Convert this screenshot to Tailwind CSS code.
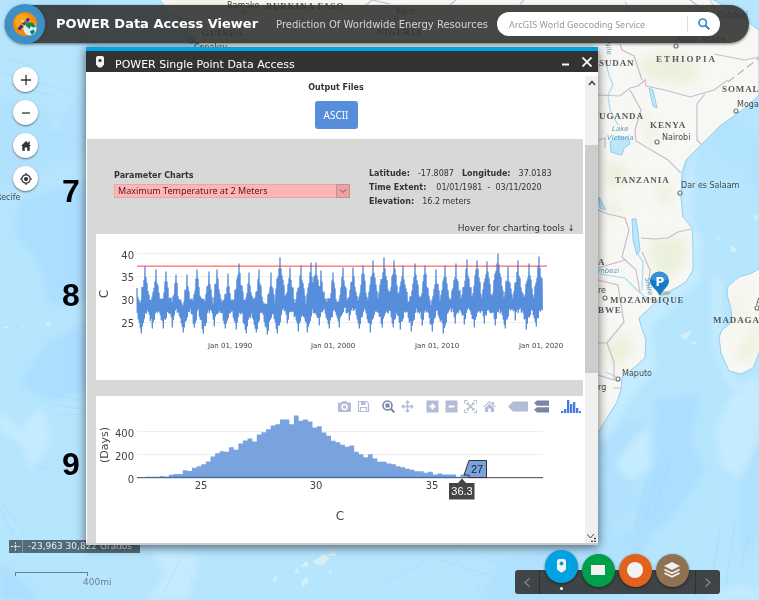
<!DOCTYPE html>
<html lang="en">
<head>
<meta charset="utf-8">
<meta name="viewport" content="width=device-width, initial-scale=1">
<title>POWER Data Access Viewer</title>
<script src="https://cdn.jsdelivr.net/npm/@tailwindcss/browser@4"></script>
</head>
<body class="relative isolate min-h-screen overflow-hidden bg-[#b4e4fe] font-['DejaVu_Sans',sans-serif] text-[#333]">

<!-- Base map -->
<svg class="absolute inset-0 -z-10 h-full w-full" viewBox="0 0 759 600" preserveAspectRatio="xMinYMin slice" role="img" aria-label="Map of southern Africa">
  <defs>
    <filter id="soft" x="-10%" y="-10%" width="120%" height="120%"><feGaussianBlur stdDeviation="3"/></filter>
    <filter id="relief" x="-10%" y="-10%" width="120%" height="120%"><feGaussianBlur stdDeviation="6"/></filter>
  </defs>
  <rect width="759" height="600" fill="#b6e5fe"/>
  <g fill="#abdeff" filter="url(#soft)">
    <path d="M0 8L60 20L95 75L60 120L52 170L90 150V0H0Z" opacity=".5"/>
    <path d="M0 95L45 110L60 150L30 185L0 190Z" opacity=".5"/>
    <path d="M18 200L88 180V320L45 345L20 385L50 400L88 390V300L50 305L38 260L16 235Z"/>
    <path d="M0 560L20 580L40 600H0Z"/>
    <path d="M655 400L700 395L690 440L705 470L670 520L630 550L640 500L655 460Z"/>
    <path d="M600 425L640 420L655 440L625 470L640 500L605 540L598 530Z" opacity=".5"/>
    <path d="M600 540L660 520L640 560L620 600H480L500 560Z" opacity=".6"/>
    <path d="M740 460L759 430V540L740 560Z" opacity=".6"/>
    <path d="M712 110L759 140V200L745 170L720 150Z" opacity=".4"/>
  </g>
  <g fill="#c4ebff" filter="url(#soft)">
    <path d="M700 120L695 160L692 220L702 240L700 280L670 310L652 325L656 370L632 395L608 440L598 440V395L680 200Z"/>
    <path d="M730 395L759 385V440L740 480L720 465L715 430Z"/>
    <path d="M632 440L650 425V470L630 480L615 465Z"/>
    <path d="M712 280L722 276V360L740 385L759 375V390L730 388L712 350Z"/>
    <path d="M0 410L20 430L40 405L50 430L48 450L30 470L22 445L0 430Z"/>
    <path d="M150 550L200 555L190 600H145L165 575Z"/>
    <path d="M710 595L735 585L759 590V600H705Z"/>
  </g>
  <g fill="none" stroke="#a3d8fb" stroke-width="1" opacity=".6">
    <path d="M5 58L30 66M0 72L70 92M10 84L60 98M40 130L80 142M50 395L85 400M55 405L84 409M60 415L86 414M25 460L52 472M0 510L20 545M4 505L26 535"/>
    <path d="M180 560L165 590M185 570L200 590M440 560L490 575M450 550L480 590M460 545L500 565M650 470L635 530M660 465L646 520M670 460L655 510M720 530L712 580M735 520L726 585M750 530L740 570M380 585L420 565L440 548"/>
  </g>
  <g fill="#d6f0f6">
    <path d="M312 562L324 554L330 558L322 566ZM300 567L306 561L309 566ZM326 556L334 551L337 556ZM294 572L297 568L299 573ZM301 583L306 577L309 581L303 587ZM273 579L277 575L276 583ZM328 571L331 570L331 575Z"/>
    <path d="M731 246L737 249L735 253L730 250ZM717 236L720 238L718 242ZM753 214L758 216L756 221ZM680 335L692 330L686 340ZM690 343L697 341L694 345Z"/>
    <path d="M1 328L8 326V328ZM20 326L25 325V327ZM45 323L52 322L49 327Z"/>
  </g>
  <g fill="#f7f8f3" stroke="#8fd0f0" stroke-width="1">
    <path d="M158 -2L170 12L184 20L188 32L196 42L216 60H400V430L599 431L610 413L617 402L621 390L622 377L636 366L645 358L646 340L641 326L639 318L651 307L662 295L676 288L686 282L693 270V248L692 228L683 217L681 197L682 173L686 160L699 147L720 126L745 108L759 95V30L745 20L735 12L710 -2Z"/>
    <path d="M762 267L752 273L739 277L728 286L727 295L731 308L732 322L722 330L719 337L721 353L729 371L741 374L753 368L762 345Z"/>
  </g>
  <g fill="#dfe9c4" opacity=".5" filter="url(#relief)">
    <path d="M640 60L672 50L700 66L690 84L655 80L640 75Z"/>
    <path d="M650 240L685 236L686 262L665 280L650 262Z"/>
    <path d="M640 106L650 120L660 150L648 140Z"/>
    <path d="M603 160L625 165L630 182L610 190Z"/>
    <path d="M655 180L672 190L670 210L660 200Z"/>
    <path d="M757 310L759 345L748 362L735 358L750 335Z"/>
    <path d="M602 350L625 330L634 350L615 370Z"/>
    <path d="M602 205L620 200L622 214L606 214Z"/>
    <path d="M165 0L250 0L240 8L180 9Z"/>
    <path d="M733 292L740 300L742 320L735 318Z"/>
  </g>
  <g fill="#bce6fa" stroke="#8fcff0">
    <path d="M610 142L616 137L628 138L630 144L624 148L622 155L617 154L611 152Z"/>
    <path d="M632 219L636 219L638 232L640 250L637 255L633 240Z"/>
    <path d="M649 88L653 90L657 108L653 106Z"/>
    <path d="M599 197L606 210L600 208Z"/>
  </g>
  <g fill="none" stroke="#a7dbf3" stroke-width="1.2">
    <path d="M605 60L609 75L613 85L608 95L610 110L618 125M600 274L625 278L636 289L644 296L652 300M638 254L643 262L642 290M618 378L606 372M710 0L716 10M625 2L632 12"/>
  </g>
  <g fill="none" stroke="#cdb9d2" stroke-width="1.2">
    <path d="M598 95L620 96L630 88L638 86L645 80L646 86L665 90L690 97L714 90L728 80M642 80L634 56L622 50L620 44M630 90L641 110L635 130L636 141L668 160L681 173M702 145L697 140V104L705 94M714 54L745 60L759 57M599 140L605 138V148M598 210L608 214L625 218L629 230L622 257L636 270L640 292M641 238L655 239L668 238L678 232L691 229M598 268L625 260M598 280L618 285L621 305L624 322L607 343L598 343M607 343L614 362V380L598 375M613 388L622 388M642 252L650 270L648 290M690 0L706 12M520 4L524 0M360 10L372 0L390 4M450 5L456 0"/>
    <path d="M728 82L759 58" stroke="#b9b4b9" stroke-dasharray="8 4"/>
  </g>
  <g fill="#fff" stroke="#777" stroke-width="1.2">
    <circle cx="676" cy="46" r="2"/><circle cx="736" cy="111" r="2"/><circle cx="657" cy="142" r="2"/><circle cx="680" cy="193" r="2"/>
    <circle cx="605" cy="298" r="2"/><circle cx="618" cy="379" r="2"/><circle cx="757" cy="308" r="2"/><circle cx="244" cy="12" r="2"/><circle cx="191" cy="41" r="2"/><circle cx="396" cy="18" r="2"/>
  </g>
  <g class="fill-[#5a5a5a] font-['Liberation_Serif',serif] text-[9px] font-bold tracking-widest">
    <text x="266" y="9">BURKINA FASO</text>
    <text x="202" y="36">GUINEA</text>
    <text x="377" y="35">NIGERIA</text>
    <text x="599" y="66">SUDAN</text>
    <text x="656" y="62" class="tracking-[2px]">ETHIOPIA</text>
    <text x="722" y="92">SOMALIA</text>
    <text x="599" y="119">UGANDA</text>
    <text x="650" y="128">KENYA</text>
    <text x="615" y="183">TANZANIA</text>
    <text x="598" y="265">A</text>
    <text x="610" y="303">MOZAMBIQUE</text>
    <text x="598" y="313">BWE</text>
    <text x="713" y="323">MADAGASCAR</text>
  </g>
  <g class="fill-[#4a4a4a] font-['DejaVu_Sans',sans-serif] text-[8px]">
    <text x="227" y="8">Bamako</text>
    <text x="396" y="14">Kano</text>
    <text x="194" y="50">Conakry</text>
    <text x="717" y="18">Djibouti</text>
    <text x="676" y="42">Addis Ababa</text>
    <text x="737" y="107">Mogadishu</text>
    <text x="662" y="140">Nairobi</text>
    <text x="681" y="188">Dar es Salaam</text>
    <text x="598" y="293">re</text>
    <text x="756" y="305">A</text>
    <text x="622" y="376">Maputo</text>
    <text x="598" y="390">rg</text>
    <text x="-4" y="200">Recife</text>
  </g>
  <g class="fill-[#5d9fbd] font-['DejaVu_Sans',sans-serif] text-[7px] italic">
    <text x="612" y="131">Lake</text>
    <text x="607" y="140">Victoria</text>
    <text x="598" y="273">mbezi</text>
    <text x="0" y="0" transform="translate(645 278) rotate(80)">Shire</text>
    <text x="0" y="0" transform="translate(605 42) rotate(80)">Nile</text>
  </g>
  <!-- Selected point -->
  <ellipse cx="664" cy="293" rx="7" ry="2" fill="#7d7442" opacity=".35"/>
  <path d="M660 296C658 290 650 287 650 281A9.500 9.500 0 0 1 669 281C669 287 662 290 660 296Z" fill="#1879c8"/>
  <path d="M651 279A8.500 7 0 0 1 668 279Q660 284 651 279Z" fill="#4ea4e2" opacity=".6"/>
  <text x="660" y="286" text-anchor="middle" class="fill-white font-['DejaVu_Sans',sans-serif] text-[12px] font-bold">P</text>
</svg>

<!-- Title bar -->
<header class="mt-[5px] mr-[10px] ml-[5px] flex h-[38px] items-center rounded-full bg-[#333]/90 shadow-[0_1px_3px_rgba(0,0,0,0.5)]">
  <svg class="h-10 w-10 shrink-0 drop-shadow-sm" viewBox="0 0 40 40" aria-hidden="true">
    <circle cx="20" cy="20" r="20" fill="#3c8fc7"/>
    <circle cx="20" cy="20" r="12" fill="#f58a0b"/>
    <circle cx="18" cy="18" r="8" fill="#fba61d"/>
    <circle cx="25" cy="25" r="6.500" fill="#dceffa"/>
    <path d="M20 20Q23 17 28 19L31 23L28 23.500L26 22L24.500 25L22 23ZM25 27L28.500 25.500L30 28L27 31L25.500 29Z" fill="#0f8a4b"/>
    <path d="M12.500 24.500L16 20.500L18.500 22.500L15 26.500ZM20.500 16L23 13.500L25 15.500L22.500 18.500Z" fill="#4b2a86"/>
    <path d="M16.500 19.500L18.500 16.500L22 18.500L19.500 21.500Z" fill="#55556a"/>
    <path d="M16.500 16L19.500 17L17.500 19Z" fill="#f5f5f5"/>
  </svg>
  <h1 class="ml-[11px] text-[13px] font-bold whitespace-nowrap text-white">POWER Data Access Viewer</h1>
  <p class="ml-[18px] text-[10px] whitespace-nowrap text-[#d4d4d4]">Prediction Of Worldwide Energy Resources</p>
  <form class="mr-[29px] ml-auto flex h-6 w-[223px] items-center rounded-full bg-white" onsubmit="return false">
    <input type="search" aria-label="Search location" placeholder="ArcGIS World Geocoding Service" class="h-full min-w-0 flex-1 bg-transparent pl-3 font-['Noto_Sans',sans-serif] text-[9px] outline-none placeholder:text-[#999]">
    <button type="submit" aria-label="Search" class="flex h-4 w-[33px] items-center justify-center border-l border-[#ddd]">
      <svg class="h-3 w-3" viewBox="0 0 12 12" fill="none" stroke="#3788c4"><circle cx="4.700" cy="4.700" r="3.700" stroke-width="1.700"/><path d="M7.500 7.500L11.300 11.300" stroke-width="2"/></svg>
    </button>
  </form>
</header>

<main class="flex items-start pt-1">
  <!-- Map controls -->
  <nav aria-label="Map controls" class="flex w-[86px] shrink-0 flex-col gap-2 pt-5 pl-[13px]">
    <button aria-label="Zoom in" class="flex h-[25px] w-[25px] items-center justify-center rounded-full bg-white shadow-[0_1px_2px_rgba(0,0,0,0.5)]"><svg class="h-3 w-3" viewBox="0 0 12 12" stroke="#333" stroke-width="1.300"><path d="M6 1V11M1 6H11"/></svg></button>
    <button aria-label="Zoom out" class="flex h-[25px] w-[25px] items-center justify-center rounded-full bg-white shadow-[0_1px_2px_rgba(0,0,0,0.5)]"><svg class="h-3 w-3" viewBox="0 0 12 12" stroke="#333" stroke-width="1.300"><path d="M2 6H10"/></svg></button>
    <button aria-label="Home" class="flex h-[25px] w-[25px] items-center justify-center rounded-full bg-white shadow-[0_1px_2px_rgba(0,0,0,0.5)]"><svg class="h-3 w-3" viewBox="0 0 12 12" fill="#333"><path d="M6 1L11 6H9.700V10.700H7.200V7.500H4.800V10.700H2.300V6H1ZM8.300 1.500H9.800V4H8.300Z"/></svg></button>
    <button aria-label="My location" class="flex h-[25px] w-[25px] items-center justify-center rounded-full bg-white shadow-[0_1px_2px_rgba(0,0,0,0.5)]"><svg class="h-3 w-3" viewBox="0 0 12 12" fill="none" stroke="#333" stroke-width="1.200"><circle cx="6" cy="6" r="4.200"/><circle cx="6" cy="6" r="1.400" fill="#333"/><path d="M6 0V2M6 10V12M0 6H2M10 6H12"/></svg></button>
  </nav>

  <!-- Widget window -->
  <section aria-labelledby="win-title" class="relative mr-[161px] min-w-0 flex-1 border-t-4 border-b-2 border-t-[#00a2e8] border-b-[#c9cccd] bg-white shadow-[0_2px_10px_rgba(0,0,0,0.6)]">
    <div class="flex h-[21px] items-center bg-[#333] pr-[3px] pl-2.5 text-white">
      <svg class="h-3 w-2" viewBox="0 0 8 12" aria-hidden="true"><path d="M2 0H6Q8 0 8 2V8.500L5.500 11.500H2.500L0 8.500V2Q0 0 2 0Z" fill="#f2f2f2"/><circle cx="4" cy="4.500" r="1.600" fill="#333"/></svg>
      <h2 id="win-title" class="ml-[11px] flex-1 pt-[6px] text-[11px] leading-[15px] whitespace-nowrap">POWER Single Point Data Access</h2>
      <button aria-label="Minimize" class="flex h-4 w-4 items-center justify-center"><svg class="h-2.5 w-2.5" viewBox="0 0 10 10" stroke="#fff" stroke-width="2"><path d="M2 7.500H9"/></svg></button>
      <button aria-label="Close" class="ml-[6px] flex h-4 w-4 items-center justify-center"><svg class="h-2.5 w-2.5" viewBox="0 0 10 10" stroke="#fff" stroke-width="1.800"><path d="M.5.5L9.500 9.500M9.500.5L.5 9.500"/></svg></button>
    </div>

    <div class="flex">
      <div class="min-w-0 flex-1 pr-[2px] pl-px">
        <div class="flex h-[67px] flex-col items-center pt-2 pl-[2px]">
          <h3 class="text-[8px] leading-4 font-bold">Output Files</h3>
          <button class="mt-[5px] h-7 w-[43px] rounded-[3px] bg-[#568edb] font-['Noto_Sans',sans-serif] text-[10px] text-white">ASCII</button>
        </div>

        <div class="bg-[#d8d8d8] pl-[9px]">
          <div class="flex pl-[18px]">
            <div class="w-[236px] pt-[29px]">
              <label for="param" class="block text-[8px] leading-4 font-bold">Parameter Charts</label>
              <div class="relative">
                <select id="param" class="block h-[14px] w-full appearance-none border border-[#eba5a5] bg-[#fcb6b7] pl-[3px] font-['Noto_Sans',sans-serif] text-[9px] leading-3 text-[#5d1719]">
                  <option>Maximum Temperature at 2 Meters</option>
                </select>
                <svg class="pointer-events-none absolute top-0 right-0 h-[14px] w-[14px]" viewBox="0 0 14 14"><path d="M.5.5H13.500V13.500H.5Z" fill="#e9a3a4" stroke="#cf8c8d"/><path d="M4 5.500L7 8.500L10 5.500" fill="none" stroke="#7b4a4b"/></svg>
              </div>
            </div>
            <dl class="ml-[19px] pt-7 text-[8px] leading-[14px] whitespace-nowrap">
              <div class="flex"><dt class="font-bold">Latitude:</dt><dd class="ml-2">-17.8087</dd><dt class="ml-2 font-bold">Longitude:</dt><dd class="ml-2">37.0183</dd></div>
              <div class="flex"><dt class="font-bold">Time Extent:</dt><dd class="ml-2.5">01/01/1981 &nbsp;- &nbsp;03/11/2020</dd></div>
              <div class="flex"><dt class="font-bold">Elevation:</dt><dd class="ml-2">16.2 meters</dd></div>
            </dl>
          </div>
          <p class="mt-[13px] pr-2 text-right text-[9px] leading-3">Hover for charting tools ↓</p>

          <!-- Time series -->
          <div class="bg-white">
            <svg class="block h-auto w-full" viewBox="96 234 487 146" role="img" aria-label="Daily maximum temperature, 1981 to 2020">
              <path d="M137 253.500H543M137 276.500H543M137 299.500H543M137 322.500H543" stroke="#eee"/>
              <path id="series" fill="none" stroke="#568edb" stroke-width="1.300" stroke-linejoin="round"/>
              <path d="M137 266.200H547" stroke="#ff2a2a" stroke-opacity=".7" stroke-width="1.200"/>
              <g class="fill-[#444] text-[10px]" text-anchor="end">
                <text x="134" y="259">40</text><text x="134" y="281">35</text><text x="134" y="304">30</text><text x="134" y="327">25</text>
              </g>
              <g class="fill-[#444] text-[7px]" text-anchor="middle">
                <text x="230" y="348">Jan 01, 1990</text><text x="333" y="348">Jan 01, 2000</text><text x="437" y="348">Jan 01, 2010</text><text x="541" y="348">Jan 01, 2020</text>
              </g>
              <text class="fill-[#444] text-[12px]" text-anchor="middle" transform="translate(108 294) rotate(-90)">C</text>
            </svg>
          </div>

          <!-- Histogram -->
          <div class="mt-4 bg-white">
            <div class="flex h-[18px] items-end justify-end gap-3 pr-[2px] pb-px text-[#b3bcd4]">
              <div class="flex gap-[6px]">
                <button aria-label="Download plot"><svg class="block h-[13px] w-[13px]" viewBox="0 0 13 13" fill="currentColor"><path fill-rule="evenodd" d="M1 2.500H3.500L4.300 1.200H8.700L9.500 2.500H12Q13 2.500 13 3.500V11Q13 12 12 12H1Q0 12 0 11V3.500Q0 2.500 1 2.500ZM6.500 3.800A3.300 3.300 0 1 0 6.500 10.400A3.300 3.300 0 1 0 6.500 3.800ZM6.500 5.300A1.800 1.800 0 1 1 6.500 8.900A1.800 1.800 0 1 1 6.500 5.300Z"/></svg></button>
                <button aria-label="Save"><svg class="block h-[13px] w-[13px]" viewBox="0 0 13 13" fill="none" stroke="currentColor"><path d="M1.500 1.500H9.500L11.500 3.500V11.500H1.500ZM3.500 11.500V7.500H9.500V11.500" stroke-width="1.200"/><path d="M4 3.500H8.500" stroke-width="3"/></svg></button>
              </div>
              <div class="flex gap-[6px]">
                <button aria-label="Zoom" class="text-[#7a86a3]"><svg class="block h-[13px] w-[13px]" viewBox="0 0 13 13" fill="none" stroke="currentColor"><circle cx="5.500" cy="5.500" r="4.500" stroke-width="1.600"/><rect x="3.500" y="3.500" width="4" height="4" fill="currentColor" stroke="none"/><path d="M9 9L12.300 12.300" stroke-width="2.200"/></svg></button>
                <button aria-label="Pan"><svg class="block h-[13px] w-[13px]" viewBox="0 0 13 13" fill="currentColor"><path d="M6.500 0L9 3H7.200V5.800H10V4L13 6.500L10 9V7.200H7.200V10H9L6.500 13L4 10H5.800V7.200H3V9L0 6.500L3 4V5.800H5.800V3H4Z"/></svg></button>
              </div>
              <div class="flex gap-[6px]">
                <button aria-label="Zoom in"><svg class="block h-[13px] w-[13px]" viewBox="0 0 13 13"><rect x=".5" y=".5" width="12" height="12" fill="currentColor"/><path d="M6.500 3.500V9.500M3.500 6.500H9.500" stroke="#fff" stroke-width="2"/></svg></button>
                <button aria-label="Zoom out"><svg class="block h-[13px] w-[13px]" viewBox="0 0 13 13"><rect x=".5" y=".5" width="12" height="12" fill="currentColor"/><path d="M3.500 6.500H9.500" stroke="#fff" stroke-width="2"/></svg></button>
                <button aria-label="Autoscale"><svg class="block h-[13px] w-[13px]" viewBox="0 0 13 13" fill="none" stroke="currentColor"><path d="M.5 3.500V.5H3.500M9.500.5H12.500V3.500M12.500 9.500V12.500H9.500M3.500 12.500H.5V9.500"/><path d="M3 3L10 10M10 3L3 10" stroke-width="1.500"/><path d="M3 5V3H5M8 3H10V5M10 8V10H8M5 10H3V8"/></svg></button>
                <button aria-label="Reset axes"><svg class="block h-[13px] w-[13px]" viewBox="0 0 13 13" fill="currentColor"><path d="M6.500 1L9.300 3.500V2H11V5L13 6.800L12.300 7.600L6.500 2.600L.7 7.600L0 6.800ZM6.500 3.800L11 7.700V12H7.800V8.500H5.200V12H2V7.700Z"/></svg></button>
              </div>
              <div class="flex gap-[6px]">
                <button aria-label="Show closest data"><svg class="block h-[13px] w-5" viewBox="0 0 20 13" fill="currentColor"><path d="M5 1.500H20V11.500H5L0 6.500Z"/></svg></button>
                <button aria-label="Compare data" class="text-[#7a86a3]"><svg class="block h-[13px] w-[15px]" viewBox="0 0 15 13" fill="currentColor"><path d="M3 .5H15V5.700H3L0 3.100ZM3 7.200H15V12.400H3L0 9.800Z"/></svg></button>
              </div>
              <a href="#" aria-label="Produced with Plotly"><svg class="block h-[13px] w-5" viewBox="0 0 20 13" fill="#447adb"><path d="M0 11H2.300V13H0ZM3 9H5.300V13H3ZM6 0H8.300V13H6ZM9 4H11.300V13H9ZM12 2H14.300V13H12ZM15 8H17.300V13H15ZM18 11H20V13H18Z"/></svg></a>
            </div>
            <svg class="block h-auto w-full" viewBox="96 414 487 129" role="img" aria-label="Histogram of days per temperature">
              <path d="M137 431.500H543M137 454.500H543" stroke="#eee"/>
              <path id="bars" fill="#78a3df"/>
              <path d="M137 477.700H543" stroke="#444"/>
              <path d="M146 477.300H460" stroke="#3f6fb8"/>
              <g class="fill-[#444] text-[10px]" text-anchor="end">
                <text x="134" y="437">400</text><text x="134" y="460">200</text><text x="134" y="483">0</text>
              </g>
              <g class="fill-[#444] text-[10px]" text-anchor="middle">
                <text x="201" y="489">25</text><text x="316" y="489">30</text><text x="432" y="489">35</text>
              </g>
              <text class="fill-[#444] text-[12px]" text-anchor="middle" x="340" y="520">C</text>
              <text class="fill-[#444] text-[11px]" text-anchor="middle" transform="translate(108 445) rotate(-90)">(Days)</text>
              <path d="M464 475L469 460.500H486.500V477.500H469V475Z" fill="#78a3df" stroke="#333"/>
              <text class="fill-[#222] font-['Liberation_Sans',sans-serif] text-[11px]" text-anchor="middle" x="477" y="473">27</text>
              <path d="M462 478.500L466 483H474.500V499.500H449V483H458Z" fill="#444"/>
              <text class="fill-white font-['Liberation_Sans',sans-serif] text-[11px]" text-anchor="middle" x="462" y="495">36.3</text>
            </svg>
          </div>
        </div>
      </div>

      <!-- Scroll bar -->
      <div class="mt-1 flex w-[13px] flex-col items-center bg-[#f0f0f0]" aria-hidden="true">
        <svg class="mt-1 h-[6px] w-2" viewBox="0 0 8 6" fill="none" stroke="#444" stroke-width="1.500"><path d="M1 5L4 1.500L7 5"/></svg>
        <div class="mt-[59px] h-[228px] w-full bg-[#cdcdcd]"></div>
        <svg class="mt-auto mb-px h-[9px] w-[9px]" viewBox="0 0 9 9" stroke="#444" fill="none"><path d="M.5 1.500L3.500 5L7 1"/><path d="M4 8.500H6M7 8.500H9M7 5.500H9" stroke-width="1.500"/></svg>
      </div>
    </div>
  </section>
</main>

<!-- Figure callouts -->
<span class="absolute top-[175px] left-[62px] font-['Liberation_Sans',sans-serif] text-[32px] leading-8 font-bold text-black">7</span>
<span class="absolute top-[279px] left-[62px] font-['Liberation_Sans',sans-serif] text-[32px] leading-8 font-bold text-black">8</span>
<span class="absolute top-[448px] left-[62px] font-['Liberation_Sans',sans-serif] text-[32px] leading-8 font-bold text-black">9</span>

<!-- Coordinates and scale -->
<div class="absolute bottom-[47px] left-[9px] -z-[5] flex h-[13px] items-center bg-[#3b4e57]/80 pr-2 text-[9px] whitespace-nowrap text-[#e6eef2]">
  <svg class="h-[13px] w-[14px] border-r border-[#8797a0]" viewBox="0 0 14 13" stroke="#e6eef2" aria-hidden="true"><path d="M7 2V4M7 9V11M2 6.500H4.500M9.500 6.500H12"/><circle cx="7" cy="6.500" r="1" fill="#e6eef2"/></svg>
  <span class="ml-[5px]">-23,963 30,822 Grados</span>
</div>
<div class="absolute bottom-[11px] left-[15px] text-[9px] text-[#6d8189]">
  <div class="h-1 w-[73px] border-x border-t border-[#6d8189]"></div>
  <div class="pl-[68px]">400mi</div>
</div>

<!-- Widget dock -->
<nav aria-label="Widgets" class="absolute right-[39px] bottom-[6px] flex h-6 w-[205px] items-center rounded-[3px] bg-[#3f4447]">
  <button aria-label="Previous" class="flex h-full w-[25px] items-center justify-center border-r border-[#2c3032]"><svg class="h-[9px] w-[6px]" viewBox="0 0 6 9" fill="none" stroke="#83888a" stroke-width="1.300"><path d="M5.500.5L1 4.500L5.500 8.500"/></svg></button>
  <div class="flex flex-1 items-center justify-center gap-1 pr-[2px] pb-6">
    <button aria-label="Single point" class="relative mb-2 flex h-[33px] w-[33px] shrink-0 items-center justify-center rounded-full bg-[#00a2e2] shadow-[0_1px_3px_rgba(0,0,0,0.5)]"><svg class="h-[14px] w-[9px]" viewBox="0 0 9 14"><path d="M2.500 0H6.500Q9 0 9 2.500V10.500L5 13.500H4L0 10.500V2.500Q0 0 2.500 0Z" fill="#f2f2f2"/><circle cx="4.500" cy="4.500" r="2" fill="#00a2e2"/></svg><span class="absolute top-[37px] h-[3px] w-[3px] rounded-full bg-white"></span></button>
    <button aria-label="Regional" class="flex h-[33px] w-[33px] shrink-0 items-center justify-center rounded-full bg-[#009f4a] shadow-[0_1px_3px_rgba(0,0,0,0.5)]"><span class="h-[10px] w-[14px] bg-[#f2f2f2]"></span></button>
    <button aria-label="Global" class="flex h-[33px] w-[33px] shrink-0 items-center justify-center rounded-full bg-[#e1611d] shadow-[0_1px_3px_rgba(0,0,0,0.5)]"><span class="h-4 w-4 rounded-full bg-[#f2f2f2]"></span></button>
    <button aria-label="Layers" class="flex h-[33px] w-[33px] shrink-0 items-center justify-center rounded-full bg-[#907252] shadow-[0_1px_3px_rgba(0,0,0,0.5)]"><svg class="h-4 w-4" viewBox="0 0 16 16"><path d="M8 0L16 4L8 8L0 4Z" fill="#f2f2f2"/><path d="M.5 7.500L8 11.200L15.500 7.500M.5 11L8 14.700L15.500 11" fill="none" stroke="#f2f2f2" stroke-width="1.700"/></svg></button>
  </div>
  <button aria-label="Next" class="flex h-full w-[25px] items-center justify-center border-l border-[#2c3032]"><svg class="h-[9px] w-[6px]" viewBox="0 0 6 9" fill="none" stroke="#83888a" stroke-width="1.300"><path d="M.5.5L5 4.500L.5 8.500"/></svg></button>
</nav>

<script>
// Yearly maxima and minima of the series, as [x, y] in chart units.
const peaks = [[137,288],[145,267],[156,270],[166,272],[176,275],[187,275],[197,270],[209,272],[217,270],[228,274],[239,264],[249,273],[259,270],[271,273],[280,258],[290,268],[301,266],[311,263],[316,263],[321,271],[333,273],[343,268],[353,268],[363,266],[373,261],[384,258],[394,261],[403,266],[415,264],[425,266],[436,270],[445,266],[456,264],[467,260],[477,261],[487,262],[498,254],[508,267],[518,261],[529,264],[539,257]];
const lows = [[141,333],[152,328],[163,328],[172,327],[183,332],[194,327],[203,333],[214,326],[225,328],[236,329],[246,333],[256,332],[267,334],[277,333],[287,323],[298,331],[307,332],[319,325],[329,328],[339,327],[349,320],[359,328],[370,332],[382,327],[393,327],[400,329],[411,331],[422,325],[432,331],[443,333],[455,323],[464,324],[474,327],[484,323],[495,325],[505,328],[515,320],[526,329],[536,326]];
let seed = 7;
const rand = () => (seed = (seed * 16807) % 2147483647) / 2147483647;
const nearest = (list, x) => list.reduce((a, b) => Math.abs(b[0] - x) < Math.abs(a[0] - x) ? b : a);
let d = '';
for (let x = 137; x <= 542; x++) {
  const p = nearest(peaks, x), l = nearest(lows, x);
  const dp = Math.abs(p[0] - x), dl = Math.abs(l[0] - x);
  const top = dp === 0 ? p[1] : Math.min(298 + rand() * 8, p[1] + 2 + dp * 6 + rand() * 8);
  const low = dl === 0 ? l[1] : Math.max(307 + rand() * 6, l[1] - dl * 3.5 - rand() * 7);
  d += (d ? 'L' : 'M') + x + ' ' + top.toFixed(1) + 'L' + (x + 0.3) + ' ' + low.toFixed(1);
}
document.getElementById('series').setAttribute('d', d);

// Histogram: days per 0.2 degree bin, as bar heights in chart units.
const bins = [.6,.6,.6,1.2,.7,2.7,3.5,3.5,7.3,6.5,9.7,11.3,13.3,16,21,24.3,26.3,25.7,30.3,27.7,34,37,39,36,43,45.3,48.3,52,53.3,58,58,53.3,62,56.7,58,56,50,51.3,45,41.7,36.7,35.3,32.7,30.7,32,25.7,23.3,20.3,23.3,19,15.7,15.7,14,13.3,11.3,10.3,8.7,7.7,6.3,6.3,4.7,5.7,3,4,3,3,3,0,3,3];
const w = 4.63, x0 = 145.7;
document.getElementById('bars').setAttribute('d', bins.map((h, i) => `M${(x0 + i * w).toFixed(2)} 477.500v${-h}h${w + 0.1}v${h}z`).join(''));
</script>
</body>
</html>
